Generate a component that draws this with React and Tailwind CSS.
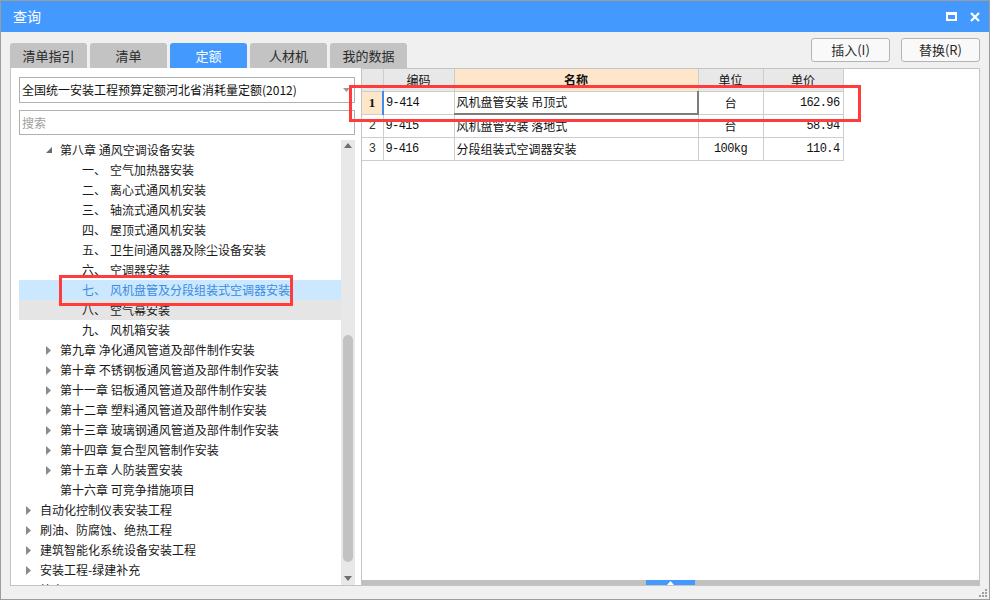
import React from 'react';

const FONT = { fontFamily: '"Noto Sans CJK SC", "Noto Sans", sans-serif' };
const MONO = { fontFamily: '"Liberation Mono", "Noto Sans CJK SC", monospace', letterSpacing: '-0.6px' };

const tabs = ['清单指引', '清单', '定额', '人材机', '我的数据'];

// lv: 1 / 2 / 3 ; arrow: 'open' | 'closed' | null
const tree = [
    { lv: 2, arrow: 'open', t: '第八章 通风空调设备安装' },
    { lv: 3, n: '一、', t: '空气加热器安装' },
    { lv: 3, n: '二、', t: '离心式通风机安装' },
    { lv: 3, n: '三、', t: '轴流式通风机安装' },
    { lv: 3, n: '四、', t: '屋顶式通风机安装' },
    { lv: 3, n: '五、', t: '卫生间通风器及除尘设备安装' },
    { lv: 3, n: '六、', t: '空调器安装' },
    { lv: 3, n: '七、', t: '风机盘管及分段组装式空调器安装', selected: true },
    { lv: 3, n: '八、', t: '空气幕安装', hover: true },
    { lv: 3, n: '九、', t: '风机箱安装' },
    { lv: 2, arrow: 'closed', t: '第九章 净化通风管道及部件制作安装' },
    { lv: 2, arrow: 'closed', t: '第十章 不锈钢板通风管道及部件制作安装' },
    { lv: 2, arrow: 'closed', t: '第十一章 铝板通风管道及部件制作安装' },
    { lv: 2, arrow: 'closed', t: '第十二章 塑料通风管道及部件制作安装' },
    { lv: 2, arrow: 'closed', t: '第十三章 玻璃钢通风管道及部件制作安装' },
    { lv: 2, arrow: 'closed', t: '第十四章 复合型风管制作安装' },
    { lv: 2, arrow: 'closed', t: '第十五章 人防装置安装' },
    { lv: 2, arrow: null, t: '第十六章 可竞争措施项目' },
    { lv: 1, arrow: 'closed', t: '自动化控制仪表安装工程' },
    { lv: 1, arrow: 'closed', t: '刷油、防腐蚀、绝热工程' },
    { lv: 1, arrow: 'closed', t: '建筑智能化系统设备安装工程' },
    { lv: 1, arrow: 'closed', t: '安装工程-绿建补充' },
    { lv: 1, arrow: null, t: '补充子目' },
];

const rows = [
    { no: '1', code: '9-414', name: '风机盘管安装 吊顶式', unit: '台', price: '162.96' },
    { no: '2', code: '9-415', name: '风机盘管安装 落地式', unit: '台', price: '58.94' },
    { no: '3', code: '9-416', name: '分段组装式空调器安装', unit: '100kg', price: '110.4' },
];

const Arrow = ({ type }) => {
    if (type === 'open') {
        return (
            <svg width="7" height="7" viewBox="0 0 7 7">
                <polygon points="6,0 6,6 0,6" fill="#6b6b6b" />
            </svg>
        );
    }
    if (type === 'closed') {
        return (
            <svg width="5" height="9" viewBox="0 0 5 9">
                <polygon points="0,0 5,4.5 0,9" fill="#8a8a8a" />
            </svg>
        );
    }
    return null;
};

const TreeRow = ({ item }) => {
    const pad = item.lv === 1 ? 'pl-[5px]' : item.lv === 2 ? 'pl-[25px]' : 'pl-[63px]';
    const bg = item.selected ? 'bg-[#cce8ff]' : item.hover ? 'bg-[#e5e5e5]' : '';
    const color = item.selected ? 'text-[#3b8be0]' : 'text-[#1a1a1a]';
    return (
        <div className={`h-[20px] flex items-center text-[12px] whitespace-nowrap ${pad} ${bg} ${color}`}>
            {item.lv !== 3 && (
                <span className="w-[16px] flex items-center pl-[2px]">
                    <Arrow type={item.arrow} />
                </span>
            )}
            {item.lv === 3 ? (
                <>
                    <span className="w-[28px]">{item.n}</span>
                    <span>{item.t}</span>
                </>
            ) : (
                <span>{item.t}</span>
            )}
        </div>
    );
};

const App = () => {
    return (
        <div className="relative w-[990px] h-[600px] bg-[#f0f0f0] border border-[#9c9c9c] flex flex-col overflow-hidden" style={FONT}>
            {/* title bar */}
            <div className="h-[31px] bg-[#4499ff] flex items-center justify-between pl-[12px] pr-[9px] text-white">
                <span className="text-[14px]">查询</span>
                <div className="flex items-center gap-[13px]">
                    <span className="w-[11px] h-[9px] border-[2px] border-t-[3px] border-white" />
                    <svg width="10" height="10" viewBox="0 0 10 10">
                        <path d="M1 1 L9 9 M9 1 L1 9" stroke="white" strokeWidth="2.2" />
                    </svg>
                </div>
            </div>

            {/* tabs + buttons */}
            <div className="h-[36px] flex justify-between pl-[9px] pr-[9px]">
                <div className="flex items-end gap-[3px]">
                    {tabs.map(t => (
                        <div
                            key={t}
                            className={`w-[77px] h-[25px] rounded-t-[3px] flex items-center justify-center text-[13px] ${t === '定额' ? 'bg-[#4499ff] text-white' : 'bg-[#c3c3c3] text-[#2a2a2a]'}`}
                        >
                            {t}
                        </div>
                    ))}
                </div>
                <div className="flex gap-[11px] pt-[6px]">
                    <button className="w-[79px] h-[24px] rounded-[3px] border border-[#b4b4b4] bg-[#f9f9f9] text-[13px] text-[#2a2a2a]">插入(I)</button>
                    <button className="w-[79px] h-[24px] rounded-[3px] border border-[#b4b4b4] bg-[#f9f9f9] text-[13px] text-[#2a2a2a]">替换(R)</button>
                </div>
            </div>

            {/* panels */}
            <div className="flex pl-[9px] pr-[9px] h-[518px]">
                {/* left */}
                <div className="w-[351px] bg-white border-l border-b border-[#c4c4c4] flex flex-col pl-[8px] pr-[6px]">
                    <div className="mt-[9px] h-[26px] border border-[#b0b0b0] flex items-center justify-between pl-[2px] pr-[4px]">
                        <span className="text-[12px] text-[#111]">全国统一安装工程预算定额河北省消耗量定额(2012)</span>
                        <svg width="7" height="4" viewBox="0 0 7 4"><polygon points="0,0 7,0 3.5,4" fill="#9a9a9a" /></svg>
                    </div>
                    <div className="mt-[7px] h-[25px] border border-[#b0b0b0] flex items-center pl-[2px]">
                        <span className="text-[12px] text-[#a0a0a0]">搜索</span>
                    </div>
                    <div className="mt-[5px] flex-1 flex overflow-hidden">
                        <div className="flex-1 overflow-hidden">
                            {tree.map((item, i) => <TreeRow key={i} item={item} />)}
                        </div>
                        <div className="w-[14px] bg-[#e8e8e8] flex flex-col items-center">
                            <svg className="mt-[3px]" width="8" height="5" viewBox="0 0 8 5"><polygon points="0,5 8,5 4,0" fill="#6e6e6e" /></svg>
                            <div className="mt-[187px] w-[10px] h-[227px] rounded-full bg-[#c2c2c2]" />
                            <svg className="mt-[14px]" width="8" height="5" viewBox="0 0 8 5"><polygon points="0,0 8,0 4,5" fill="#6e6e6e" /></svg>
                        </div>
                    </div>
                </div>

                {/* right */}
                <div className="flex-1 bg-white border border-[#c4c4c4] flex flex-col">
                    <div className="flex-1">
                        <table className="border-collapse text-[12px] text-[#111]">
                            <thead>
                                <tr className="h-[22px] bg-[#e8e8e8]">
                                    <th className="w-[21px] border border-[#cdcdcd] border-t-0 border-l-0"></th>
                                    <th className="w-[71px] border border-[#cdcdcd] border-t-0 font-normal">编码</th>
                                    <th className="w-[244px] border border-[#cdcdcd] border-t-0 bg-[#fde6c9] font-bold">名称</th>
                                    <th className="w-[65px] border border-[#cdcdcd] border-t-0 font-normal">单位</th>
                                    <th className="w-[80px] border border-[#cdcdcd] border-t-0 font-normal">单价</th>
                                </tr>
                            </thead>
                            <tbody>
                                {rows.map((r, i) => (
                                    <tr key={r.no} className="h-[23px]">
                                        <td
                                            className={`border border-[#cdcdcd] border-l-0 text-center ${i === 0 ? 'bg-[#fde6c9] font-bold text-[13px]' : 'text-[12px] text-[#333]'}`}
                                            style={{ fontFamily: i === 0 ? '"Liberation Serif", serif' : '"Liberation Mono", monospace' }}
                                        >
                                            {r.no}
                                        </td>
                                        <td className={`border border-[#cdcdcd] pl-[2px] ${i === 0 ? 'border-l-2 border-l-[#3d8ef0]' : ''}`} style={MONO}>{r.code}</td>
                                        <td className={`pl-[2px] ${i === 0 ? 'border border-t-[#4499ff] border-l-[#cdcdcd] border-r-2 border-b-2 border-r-[#7d7d7d] border-b-[#7d7d7d]' : 'border border-[#cdcdcd]'}`}>{r.name}</td>
                                        <td className="border border-[#cdcdcd] text-center" style={r.unit === '台' ? undefined : MONO}>{r.unit}</td>
                                        <td className="border border-[#cdcdcd] text-right pr-[3px]" style={MONO}>{r.price}</td>
                                    </tr>
                                ))}
                            </tbody>
                        </table>
                    </div>
                    {/* horizontal scrollbar */}
                    <div className="h-[5px] bg-[#c0c0c0] flex">
                        <div className="ml-[284px] w-[49px] bg-[#4499ff] flex justify-center items-end">
                            <svg width="7" height="4" viewBox="0 0 7 4"><polygon points="0,4 7,4 3.5,0" fill="white" /></svg>
                        </div>
                    </div>
                </div>
            </div>

            {/* resize grip */}
            <div className="absolute right-[2px] bottom-[2px] w-[8px] h-[8px]">
                <svg width="8" height="8" viewBox="0 0 8 8">
                    <rect x="6" y="0" width="2" height="2" fill="#a0a0a0" />
                    <rect x="3" y="3" width="2" height="2" fill="#a0a0a0" />
                    <rect x="6" y="3" width="2" height="2" fill="#a0a0a0" />
                    <rect x="0" y="6" width="2" height="2" fill="#a0a0a0" />
                    <rect x="3" y="6" width="2" height="2" fill="#a0a0a0" />
                    <rect x="6" y="6" width="2" height="2" fill="#a0a0a0" />
                </svg>
            </div>

            {/* red highlight boxes */}
            <div className="absolute left-[348px] top-[84px] w-[512px] h-[37px] border-[3px] border-[#ff3b3b]" />
            <div className="absolute left-[58px] top-[274px] w-[234px] h-[31px] border-[3px] border-[#ff3b3b]" />
        </div>
    );
};

export default App;
